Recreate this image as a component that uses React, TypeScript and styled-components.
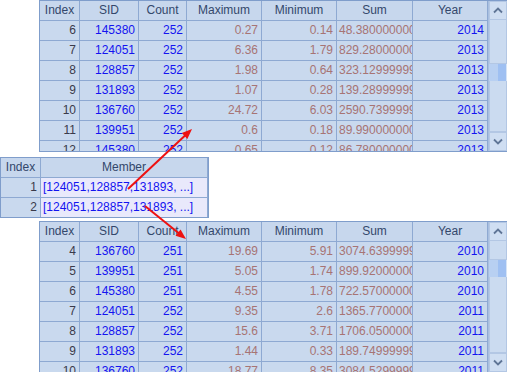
import React from 'react';
import styled, { createGlobalStyle } from 'styled-components';

const GlobalStyle = createGlobalStyle`
    html, body {
        margin: 0;
        padding: 0;
        background: #ffffff;
    }
    body {
        font-family: "Liberation Sans", Arial, sans-serif;
        font-size: 12px;
    }
`;

type Tone = 'index' | 'blue' | 'brown' | 'member';
type Align = 'left' | 'right' | 'center';

interface Column {
    title: string;
    width: number;
    tone: Tone;
    align: Align;
}

const dataColumns: Column[] = [
    { title: 'Index', width: 40, tone: 'index', align: 'right' },
    { title: 'SID', width: 59, tone: 'blue', align: 'right' },
    { title: 'Count', width: 48, tone: 'blue', align: 'right' },
    { title: 'Maximum', width: 75, tone: 'brown', align: 'right' },
    { title: 'Minimum', width: 75, tone: 'brown', align: 'right' },
    { title: 'Sum', width: 76, tone: 'brown', align: 'left' },
    { title: 'Year', width: 75, tone: 'blue', align: 'right' },
];

const memberColumns: Column[] = [
    { title: 'Index', width: 40, tone: 'index', align: 'right' },
    { title: 'Member', width: 167, tone: 'member', align: 'left' },
];

// Sum values are deliberately longer than the column: the grid clips them
const topRows = [
    ['6', '145380', '252', '0.27', '0.14', '48.380000000001', '2014'],
    ['7', '124051', '252', '6.36', '1.79', '829.28000000001', '2013'],
    ['8', '128857', '252', '1.98', '0.64', '323.12999999999', '2013'],
    ['9', '131893', '252', '1.07', '0.28', '139.28999999999', '2013'],
    ['10', '136760', '252', '24.72', '6.03', '2590.7399999999', '2013'],
    ['11', '139951', '252', '0.6', '0.18', '89.990000000001', '2013'],
    ['12', '145380', '252', '0.65', '0.12', '86.780000000001', '2013'],
];

const bottomRows = [
    ['4', '136760', '251', '19.69', '5.91', '3074.6399999999', '2010'],
    ['5', '139951', '251', '5.05', '1.74', '899.92000000001', '2010'],
    ['6', '145380', '251', '4.55', '1.78', '722.57000000001', '2010'],
    ['7', '124051', '252', '9.35', '2.6', '1365.7700000001', '2011'],
    ['8', '128857', '252', '15.6', '3.71', '1706.0500000001', '2011'],
    ['9', '131893', '252', '1.44', '0.33', '189.74999999999', '2011'],
    ['10', '136760', '252', '18.77', '8.35', '3084.5299999999', '2011'],
];

const memberRows = [
    ['1', '[124051,128857,131893, ...]'],
    ['2', '[124051,128857,131893, ...]'],
];

const toneColor: Record<Tone, string> = {
    index: '#3a3a4a',
    blue: '#1414f0',
    brown: '#a77474',
    member: '#1414f0',
};

const Page = styled.div`
    position: relative;
    width: 507px;
    height: 372px;
    overflow: hidden;
`;

const Stack = styled.div`
    display: flex;
    flex-direction: column;
`;

const Frame = styled.div<{ $left: number; $top: number; $height: number }>`
    margin-left: ${(p) => p.$left}px;
    margin-top: ${(p) => p.$top}px;
    height: ${(p) => p.$height}px;
    border: 1px solid #7f9dcb;
    display: flex;
    align-self: flex-start;
    overflow: hidden;
    background: #c9d9ee;
`;

const Grid = styled.div<{ $cols: string }>`
    display: grid;
    grid-template-columns: ${(p) => p.$cols};
    grid-auto-rows: 20px;
    align-content: start;
`;

const HeadCell = styled.div`
    box-sizing: border-box;
    border-right: 1px solid #8ea9d2;
    border-bottom: 1px solid #8ea9d2;
    background: #c7d7ed;
    color: #33476b;
    text-align: center;
    line-height: 19px;
    white-space: nowrap;
    overflow: hidden;
`;

const Cell = styled.div<{ $tone: Tone; $align: Align }>`
    box-sizing: border-box;
    border-right: 1px solid #8ea9d2;
    border-bottom: 1px solid #8ea9d2;
    background: ${(p) => (p.$tone === 'member' ? '#e9e9fb' : '#c9d9ee')};
    color: ${(p) => toneColor[p.$tone]};
    text-align: ${(p) => p.$align};
    padding: ${(p) => (p.$align === 'left' ? '0 0 0 2px' : '0 3px 0 0')};
    line-height: 19px;
    white-space: nowrap;
    overflow: hidden;
    text-overflow: clip;
`;

const ScrollBar = styled.div`
    width: 18px;
    display: flex;
    flex-direction: column;
    background: #d3e1f3;
    border-left: 1px solid #a9bfdf;
`;

const ScrollButton = styled.div`
    height: 19px;
    flex: none;
    display: flex;
    align-items: center;
    justify-content: center;
    background: #cfdef2;
    border: 1px solid #b3c7e4;
    box-sizing: border-box;
`;

const Track = styled.div<{ $grow: number }>`
    flex: ${(p) => p.$grow} 1 0;
    background: #cbdbf0;
    border: 1px solid #b3c7e4;
    border-top: none;
    box-sizing: border-box;
`;

const Thumb = styled.div`
    height: 17px;
    flex: none;
    background: linear-gradient(to right, #b8d0f2 0%, #b8d0f2 55%, #9fc0f2 55%, #9fc0f2 100%);
    border-right: 1px solid #d6e4f6;
    box-sizing: border-box;
`;

const Overlay = styled.svg`
    position: absolute;
    left: 0;
    top: 0;
    pointer-events: none;
`;

const Chevron: React.FC<{ up?: boolean }> = ({ up }) => (
    <svg width="10" height="7" viewBox="0 0 10 7">
        <path
            d={up ? 'M1 5.5 L5 1.5 L9 5.5' : 'M1 1.5 L5 5.5 L9 1.5'}
            fill="none"
            stroke="#5f7596"
            strokeWidth="1.8"
        />
    </svg>
);

interface TableProps {
    columns: Column[];
    rows: string[][];
    left: number;
    top: number;
    height: number;
    thumbAt?: number;
}

const DataTable: React.FC<TableProps> = ({ columns, rows, left, top, height, thumbAt }) => {
    const cols = columns.map((c) => `${c.width}px`).join(' ');
    return (
        <Frame $left={left} $top={top} $height={height}>
            <Grid $cols={cols}>
                {columns.map((c) => (
                    <HeadCell key={c.title}>{c.title}</HeadCell>
                ))}
                {rows.map((row, r) =>
                    row.map((value, i) => (
                        <Cell key={`${r}-${i}`} $tone={columns[i].tone} $align={columns[i].align}>
                            {value}
                        </Cell>
                    ))
                )}
            </Grid>
            {thumbAt !== undefined && (
                <ScrollBar>
                    <ScrollButton>
                        <Chevron up />
                    </ScrollButton>
                    <Track $grow={thumbAt} />
                    <Thumb />
                    <Track $grow={100 - thumbAt} />
                    <ScrollButton>
                        <Chevron />
                    </ScrollButton>
                </ScrollBar>
            )}
        </Frame>
    );
};

const Arrow: React.FC<{ x1: number; y1: number; x2: number; y2: number }> = ({ x1, y1, x2, y2 }) => {
    const angle = Math.atan2(y2 - y1, x2 - x1);
    const len = 11;
    const spread = 0.38;
    const ax = x2 - len * Math.cos(angle - spread);
    const ay = y2 - len * Math.sin(angle - spread);
    const bx = x2 - len * Math.cos(angle + spread);
    const by = y2 - len * Math.sin(angle + spread);
    const ex = x2 - 8 * Math.cos(angle);
    const ey = y2 - 8 * Math.sin(angle);
    return (
        <g>
            <line x1={x1} y1={y1} x2={ex} y2={ey} stroke="#ee1111" strokeWidth="2" />
            <polygon points={`${x2},${y2} ${ax},${ay} ${bx},${by}`} fill="#ee1111" />
        </g>
    );
};

export default function App() {
    return (
        <Page>
            <GlobalStyle />
            <Stack>
                <DataTable columns={dataColumns} rows={topRows} left={39} top={0} height={150} thumbAt={46} />
                <DataTable columns={memberColumns} rows={memberRows} left={0} top={5} height={59} />
                <DataTable columns={dataColumns} rows={bottomRows} left={39} top={3} height={150} thumbAt={19} />
            </Stack>
            <Overlay width="507" height="372">
                <Arrow x1={128} y1={189} x2={192} y2={129} />
                <Arrow x1={145} y1={206} x2={186} y2={239} />
            </Overlay>
        </Page>
    );
}
